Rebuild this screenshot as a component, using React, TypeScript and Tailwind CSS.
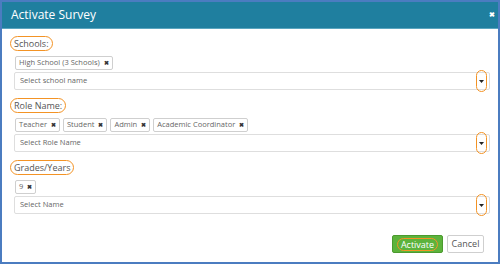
import React from "react";

const Tag: React.FC<{ label: string }> = ({ label }) => (
  <span className="flex h-[14px] items-center gap-[4px] rounded-[2px] border border-[#cfcfcf] bg-white px-[3px] text-[7.5px] leading-none text-[#666]">
    {label}
    <span className="text-[6px] font-bold text-[#333]">✖</span>
  </span>
);

const Circled: React.FC<{ children: React.ReactNode }> = ({ children }) => (
  <span className="inline-flex h-[15px] items-center rounded-full border-[1.5px] border-[#f39325] px-[3px] text-[9px] leading-none text-[#555]">
    {children}
  </span>
);

const SelectBox: React.FC<{ placeholder: string }> = ({ placeholder }) => (
  <div className="flex h-[18px] items-center justify-between rounded-[2px] border border-[#dedede] bg-white pl-[5px] pr-[2px]">
    <span className="text-[7.5px] text-[#666]">{placeholder}</span>
    <span className="-my-[3px] flex h-[22px] w-[11px] items-center justify-center rounded-full border-[1.5px] border-[#f39325]">
      <svg width="5" height="3" viewBox="0 0 5 3">
        <path d="M0 0h5L2.5 3z" fill="#222" />
      </svg>
    </span>
  </div>
);

interface Section {
  label: string;
  tags: string[];
  placeholder: string;
}

const sections: Section[] = [
  { label: "Schools:", tags: ["High School (3 Schools)"], placeholder: "Select school name" },
  {
    label: "Role Name:",
    tags: ["Teacher", "Student", "Admin", "Academic Coordinator"],
    placeholder: "Select Role Name",
  },
  { label: "Grades/Years", tags: ["9"], placeholder: "Select Name" },
];

export default function App() {
  return (
    <div
      className="flex h-[264px] w-[500px] flex-col border-2 border-[#4b7cc0] bg-white"
      style={{ fontFamily: '"Open Sans", "Liberation Sans", sans-serif' }}
    >
      <div className="flex h-[27px] items-center justify-between border-b border-[#5aa5bf] bg-[#1f7f9f] pl-[9px] pr-[3px]">
        <span className="text-[12px] text-white">Activate Survey</span>
        <span className="text-[7px] font-bold text-white">✖</span>
      </div>
      <div className="flex flex-col gap-[8px] pl-[8px] pr-[8px] pt-[7px]">
        {sections.map((s) => (
          <div key={s.label} className="flex flex-col">
            <div className="flex">
              <Circled>{s.label}</Circled>
            </div>
            <div className="ml-[5px] mt-[5px] flex gap-[3px]">
              {s.tags.map((t) => (
                <Tag key={t} label={t} />
              ))}
            </div>
            <div className="ml-[4px] mt-[2px]">
              <SelectBox placeholder={s.placeholder} />
            </div>
          </div>
        ))}
      </div>
      <div className="mt-[21px] flex justify-end gap-[4px] pr-[14px]">
        <button className="flex h-[18px] w-[51px] items-center justify-center rounded-[2px] border border-[#4b9a2e] bg-[#5cb33c]">
          <span className="rounded-full border-[1.5px] border-[#f39325] px-[3px] text-[9px] leading-[11px] text-white">
            Activate
          </span>
        </button>
        <button className="h-[18px] w-[37px] rounded-[2px] border border-[#cfcfcf] bg-white text-[9px] text-[#555]">
          Cancel
        </button>
      </div>
    </div>
  );
}
